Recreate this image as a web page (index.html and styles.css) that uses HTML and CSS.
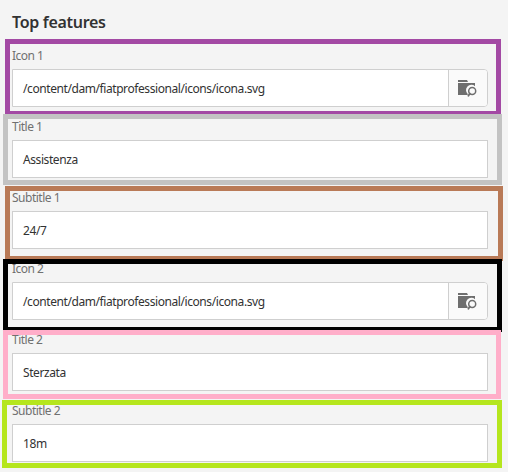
FILE: index.html
```html
<!DOCTYPE html>
<html lang="en">
<head>
<meta charset="utf-8">
<title>Top features</title>
<link rel="stylesheet" href="styles.css">
</head>
<body>
<svg class="defs" width="0" height="0" aria-hidden="true">
  <symbol id="browse" viewBox="0 0 20 18">
    <path fill="#6e6e6e" d="M0 1h9l1 2H0zM0 4h17v3.2a5.2 5.2 0 0 0-7.3 7.8v1H0z"/>
    <circle cx="14.2" cy="12" r="3.5" fill="none" stroke="#6e6e6e" stroke-width="1.5"/>
    <path d="M11.8 14.5l-1.4 2.2" stroke="#6e6e6e" stroke-width="1.8" stroke-linecap="round"/>
  </symbol>
</svg>
<main class="panel">
  <h1 class="heading">Top features</h1>
  <div class="field">
    <label class="label">Icon 1</label>
    <div class="control path"><span class="value">/content/dam/fiatprofessional/icons/icona.svg</span><button class="browse" aria-label="Browse"><svg width="20" height="18"><use href="#browse"/></svg></button></div>
  </div>
  <div class="field">
    <label class="label">Title 1</label>
    <div class="control"><span class="value">Assistenza</span></div>
  </div>
  <div class="field">
    <label class="label">Subtitle 1</label>
    <div class="control"><span class="value">24/7</span></div>
  </div>
  <div class="field">
    <label class="label">Icon 2</label>
    <div class="control path"><span class="value">/content/dam/fiatprofessional/icons/icona.svg</span><button class="browse" aria-label="Browse"><svg width="20" height="18"><use href="#browse"/></svg></button></div>
  </div>
  <div class="field">
    <label class="label">Title 2</label>
    <div class="control"><span class="value">Sterzata</span></div>
  </div>
  <div class="field">
    <label class="label">Subtitle 2</label>
    <div class="control"><span class="value">18m</span></div>
  </div>
</main>
<div class="frame purple"></div>
<div class="frame gray"></div>
<div class="frame brown"></div>
<div class="frame black"></div>
<div class="frame pink"></div>
<div class="frame lime"></div>
</body>
</html>
```
FILE: styles.css
```css
* { box-sizing: border-box; }
html, body { height: 100%; }
body {
  margin: 0;
  position: relative;
  overflow: hidden;
  background: #f4f4f4;
  font-family: "Noto Sans", "Open Sans", sans-serif;
  color: #323232;
}
.defs { display: block; }
.panel { padding: 12px 20px 0 12px; }
.heading {
  margin: 0;
  height: 34px;
  font-size: 16px;
  line-height: 20px;
  font-weight: 600;
  letter-spacing: -0.3px;
}
.field { height: 71px; }
.label {
  display: block;
  height: 23px;
  line-height: 20px;
  font-size: 12px;
  color: #707070;
  letter-spacing: -0.5px;
}
.control {
  display: flex;
  height: 38px;
  background: #fff;
  border: 1px solid #cfcfcf;
}
.path { border-radius: 0 4px 4px 0; }
.value {
  flex: 1;
  padding-left: 10px;
  font-size: 12px;
  line-height: 38px;
  letter-spacing: -0.42px;
}
.browse {
  width: 39px;
  padding: 0;
  display: flex;
  align-items: center;
  justify-content: center;
  border: 0;
  border-left: 1px solid #cfcfcf;
  border-radius: 0 3px 3px 0;
  background: #fafafa;
}

/* Coloured frames laid over the form rows */
.frame { position: absolute; border: 5px solid; pointer-events: none; }
.purple { left: 5px; top: 39px; width: 496px; height: 77px; border-color: #a349a4; }
.gray { left: 3px; top: 114px; width: 499px; height: 71px; border-color: #c3c3c3; }
.brown { left: 5px; top: 186px; width: 498px; height: 75px; border-color: #b97a57; }
.black { left: 3px; top: 259px; width: 499px; height: 73px; border-color: #000; }
.pink { left: 3px; top: 330px; width: 498px; height: 69px; border-color: #ffaec9; }
.lime { left: 2px; top: 400px; width: 500px; height: 68px; border-color: #b5e61d; }
```
